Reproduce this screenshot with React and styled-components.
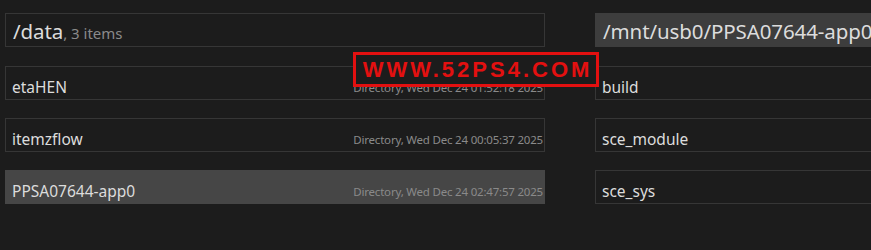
import React from 'react';
import styled, { createGlobalStyle } from 'styled-components';

const Global = createGlobalStyle`
  html, body { margin: 0; padding: 0; background: #1c1c1c; }
  body { font-family: "Noto Sans", "Open Sans", sans-serif; }
`;

const Screen = styled.div`
  position: relative;
  width: 871px;
  height: 250px;
  overflow: hidden;
  background: #1c1c1c;
  display: flex;
  gap: 50px;
  padding: 13px 0 0 5px;
  box-sizing: border-box;
`;

const Panel = styled.div`
  flex: 0 0 540px;
  display: flex;
  flex-direction: column;
  gap: 18px;
`;

const Header = styled.div`
  height: 34px;
  box-sizing: border-box;
  border: 1px solid ${(p) => (p.active ? '#3d3d3d' : '#363636')};
  background: ${(p) => (p.active ? '#3d3d3d' : 'transparent')};
  display: flex;
  align-items: flex-end;
  padding: 0 8px 1px 7px;
  margin-bottom: 1px;
  color: #dcdcdc;
  white-space: nowrap;
  overflow: hidden;
`;

const Path = styled.span`
  font-size: 20.5px;
  line-height: 28px;
  letter-spacing: -0.1px;
`;

const Count = styled.span`
  font-size: 15px;
  line-height: 24px;
  color: #8a8a8a;
`;

const Row = styled.div`
  height: 34px;
  box-sizing: border-box;
  border: 1px solid ${(p) => (p.selected ? '#464646' : '#363636')};
  background: ${(p) => (p.selected ? '#464646' : 'transparent')};
  display: flex;
  align-items: flex-end;
  justify-content: space-between;
  padding: 0 0 2px 6px;
`;

const Name = styled.span`
  font-size: 15.5px;
  line-height: 20px;
  color: #dcdcdc;
`;

const Meta = styled.span`
  font-size: 11.5px;
  line-height: 16px;
  color: #8a8a8a;
  letter-spacing: -0.2px;
  padding: 0 1px 1px 0;
`;

const Stamp = styled.div`
  position: absolute;
  left: 353px;
  top: 52px;
  width: 246px;
  height: 35px;
  box-sizing: border-box;
  border: 3px solid #e31010;
  background: #1c1c1c;
  display: flex;
  align-items: center;
  justify-content: center;
  color: #e31010;
  font-family: "Liberation Sans", Arial, sans-serif;
  font-weight: bold;
  font-size: 22px;
  letter-spacing: 3px;
  padding-left: 3px;
`;

const left = [
  { name: 'etaHEN', date: 'Wed Dec 24 01:52:18 2025' },
  { name: 'itemzflow', date: 'Wed Dec 24 00:05:37 2025' },
  { name: 'PPSA07644-app0', date: 'Wed Dec 24 02:47:57 2025', selected: true },
];

const right = ['build', 'sce_module', 'sce_sys'];

export default function App() {
  return (
    <>
      <Global />
      <Screen>
        <Panel>
          <Header>
            <Path>/data</Path>
            <Count>, 3 items</Count>
          </Header>
          {left.map((r) => (
            <Row key={r.name} selected={r.selected}>
              <Name>{r.name}</Name>
              <Meta>Directory, {r.date}</Meta>
            </Row>
          ))}
        </Panel>
        <Panel>
          <Header active>
            <Path>/mnt/usb0/PPSA07644-app0</Path>
          </Header>
          {right.map((n) => (
            <Row key={n}>
              <Name>{n}</Name>
            </Row>
          ))}
        </Panel>
        <Stamp>WWW.52PS4.COM</Stamp>
      </Screen>
    </>
  );
}
